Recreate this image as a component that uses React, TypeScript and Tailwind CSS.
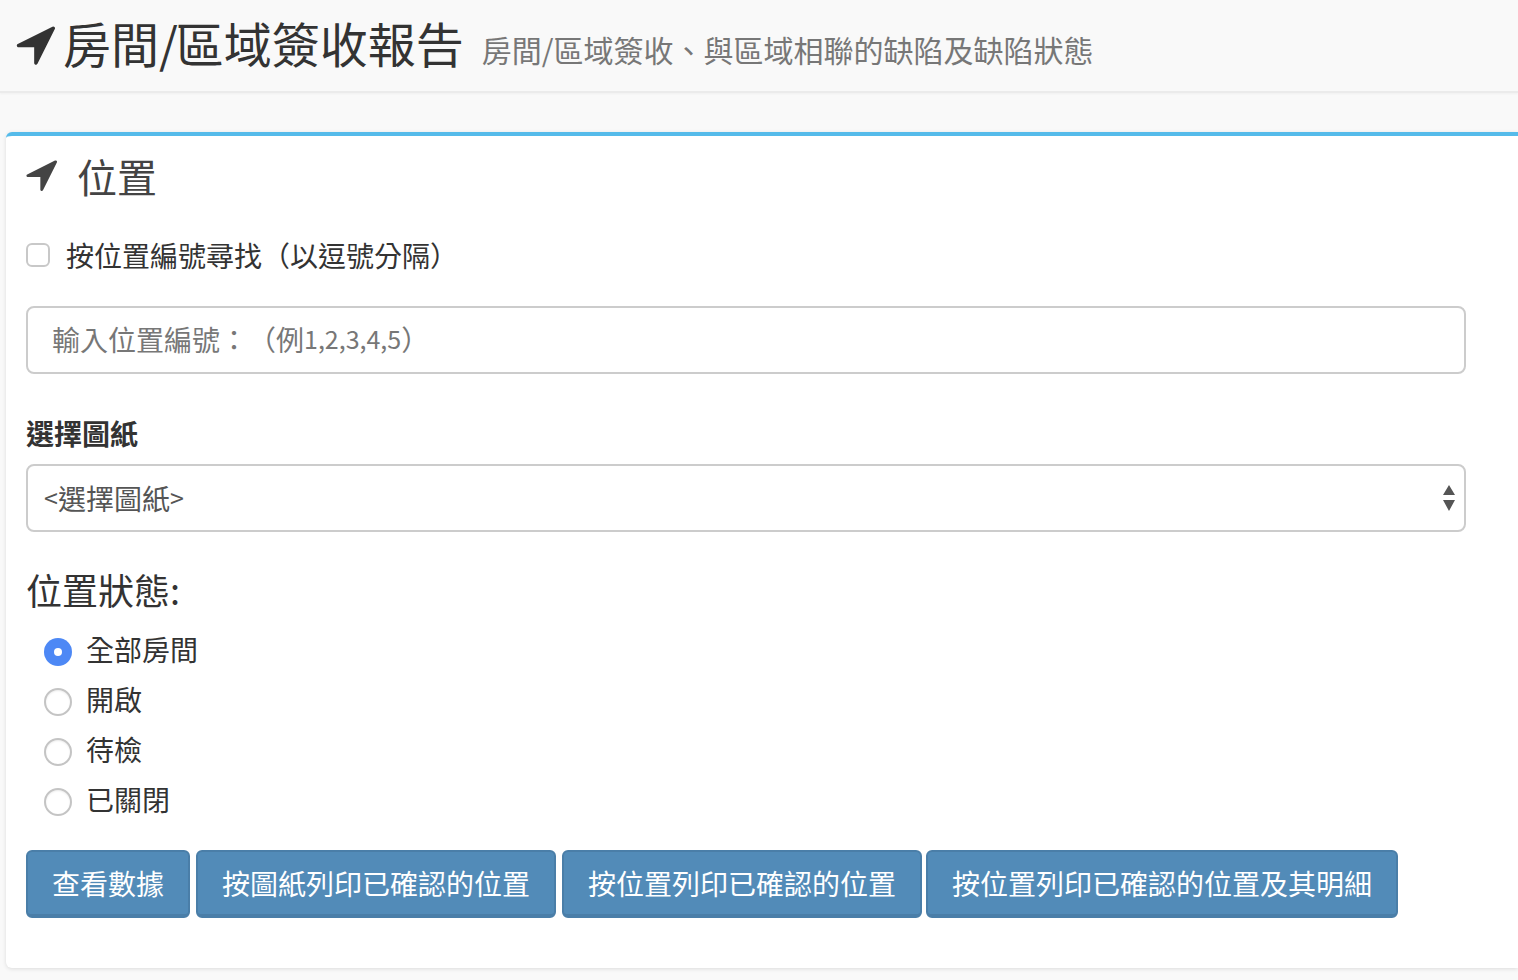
const FONT = "font-['Noto_Sans_CJK_TC','Liberation_Sans',sans-serif] [text-spacing-trim:space-all]";

const ArrowIcon = ({ className }: { className: string }) => (
  <svg viewBox="125 285 1475 1380" className={className} fill="currentColor">
    <path d="M1593 349l-640 1280q-17 35-57 35-5 0-15-2-22-5-35.5-22.5t-13.5-39.5v-576h-576q-22 0-39.5-13.5t-22.5-35.5 4-42 29-30l1280-640q13-7 29-7 27 0 45 19 15 14 18.5 34.5t-5.5 39.5z" />
  </svg>
);

const Radio = ({ label, checked }: { label: string; checked?: boolean }) => (
  <label className="flex h-[50px] items-center pl-[18px]">
    {checked ? (
      <span className="flex h-7 w-7 items-center justify-center rounded-full bg-[#4d88f5]">
        <span className="h-2 w-2 rounded-full bg-white" />
      </span>
    ) : (
      <span className="h-7 w-7 rounded-full border-2 border-[#c4c4c4] bg-white shadow-[inset_0_1px_2px_rgba(0,0,0,0.08)]" />
    )}
    <span className="ml-[14px] pb-[6px] text-[28px] leading-10 text-[#333]">{label}</span>
  </label>
);

const ActionButton = ({ label, className }: { label: string; className: string }) => (
  <button
    className={`h-[68px] rounded-md border-2 border-b-4 border-[#4a7ea8] bg-[#528bb8] text-[28px] leading-none text-white ${className}`}
  >
    {label}
  </button>
);

export default function App() {
  return (
    <div className={`h-[980px] overflow-hidden bg-[#f9f9f9] ${FONT}`}>
      <header className="flex h-[93px] items-center border-b-2 border-[#ebebeb] pl-[15px] shadow-[0_1px_2px_rgba(0,0,0,0.04)]">
        <ArrowIcon className="h-10 w-10 text-[#333]" />
        <h1 className="ml-2 pb-2 text-[48px] font-normal leading-none text-[#333]">
          房間<span className="tracking-[-2px]">/</span>區域簽收報告
        </h1>
        <span className="ml-[18px] mt-[6px] text-[30px] leading-none text-[#777]">
          房間/區域簽收、與區域相聯的缺陷及缺陷狀態
        </span>
      </header>

      <main className="ml-[6px] mt-[39px] h-[836px] rounded-l-md border-t-4 border-[#55bbea] bg-white pl-5 shadow-[0_1px_4px_rgba(0,0,0,0.12)]">
        <div className="-ml-px flex h-[80px] items-center text-[#444]">
          <ArrowIcon className="h-8 w-8" />
          <h3 className="ml-[20px] text-[40px] font-normal leading-none">位置</h3>
        </div>

        <div className="mt-[19px] flex h-10 items-center">
          <span className="h-6 w-6 rounded-md border-2 border-[#c8c8c8] bg-white" />
          <span className="ml-4 text-[28px] leading-10 text-[#333]">按位置編號尋找（以逗號分隔）</span>
        </div>

        <div className="mt-[31px] flex h-[68px] w-[1440px] items-center rounded-lg border-2 border-[#ccc] px-6 pb-[2px] text-[28px] text-[#777]">
          輸入位置編號：（例<span className="text-[25px]">1,2,3,4,5</span>）
        </div>

        <div className="mt-[39px] text-[28px] font-bold leading-10 text-[#333]">選擇圖紙</div>

        <div className="relative mt-[11px] flex h-[68px] w-[1440px] items-center rounded-lg border-2 border-[#ccc] pl-4 text-[28px] text-[#555]">
          <span className="text-[25px]">&lt;</span>選擇圖紙<span className="text-[25px]">&gt;</span>
          <svg viewBox="0 0 14 28" className="absolute right-[8px] top-[18px] h-[28px] w-[14px]" fill="#555">
            <path d="M7 1 L13 11 L1 11 Z M1 16 L13 16 L7 27 Z" />
          </svg>
        </div>

        <div className="mt-[32px] text-[36px] leading-[50px] text-[#333]">位置狀態:</div>

        <div className="mt-[13px] flex flex-col">
          <Radio label="全部房間" checked />
          <Radio label="開啟" />
          <Radio label="待檢" />
          <Radio label="已關閉" />
        </div>

        <div className="mt-[23px] flex">
          <ActionButton label="查看數據" className="w-[164px]" />
          <ActionButton label="按圖紙列印已確認的位置" className="ml-[6px] w-[360px]" />
          <ActionButton label="按位置列印已確認的位置" className="ml-[6px] w-[360px]" />
          <ActionButton label="按位置列印已確認的位置及其明細" className="ml-1 w-[472px]" />
        </div>
      </main>
    </div>
  );
}
